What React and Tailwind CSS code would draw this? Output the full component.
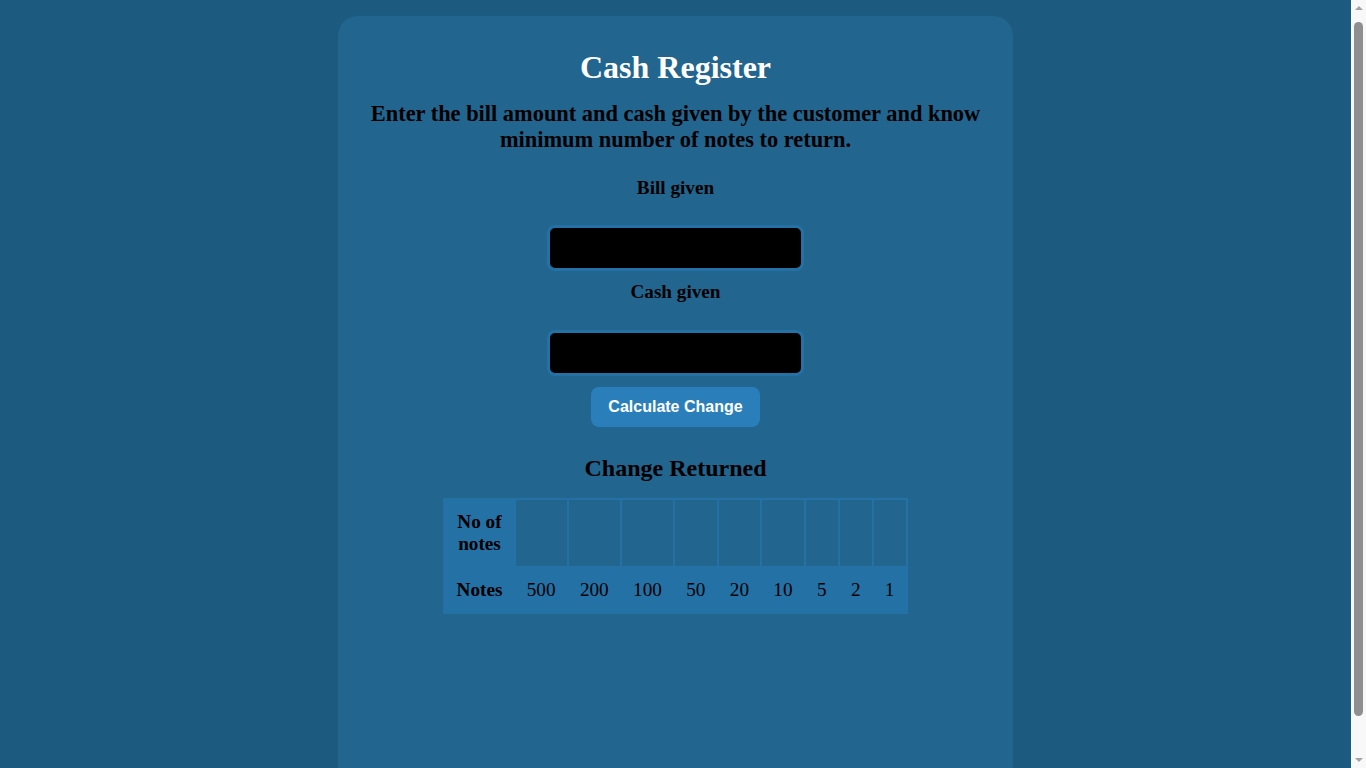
import { useState } from "react";

const notes = [500, 200, 100, 50, 20, 10, 5, 2, 1];

const App = () => {
    const [bill, setBill] = useState("");
    const [cash, setCash] = useState("");
    const [counts, setCounts] = useState(notes.map(() => ""));

    const calculate = () => {
        let left = Number(cash) - Number(bill);
        if (!bill || !cash || left < 0) {
            setCounts(notes.map(() => ""));
            return;
        }
        setCounts(
            notes.map((n) => {
                const c = Math.floor(left / n);
                left = left % n;
                return c;
            })
        );
    };

    return (
        <div className="min-h-screen bg-[#1d5a7f] py-4 pr-[15px] font-['Liberation_Serif',serif] leading-[1.15] text-black">
            <div className="mx-auto flex min-h-[780px] w-1/2 flex-col items-center rounded-[20px] bg-[#22658f] px-6 pt-[33px] text-center">
                <h1 className="text-[32px] font-bold text-white">Cash Register</h1>
                <h2 className="mt-[15px] text-[22.4px] font-bold">
                    Enter the bill amount and cash given by the customer and know minimum number of notes to return.
                </h2>

                <label htmlFor="bill" className="mt-[25px] text-[19.2px] font-bold">
                    Bill given
                </label>
                <input
                    id="bill"
                    type="number"
                    value={bill}
                    onChange={(e) => setBill(e.target.value)}
                    className="mt-[26px] h-[46px] w-[257px] rounded-lg border-[3px] border-[#2471a6] bg-black px-2 text-white outline-none"
                />

                <label htmlFor="cash" className="mt-[10px] text-[19.2px] font-bold">
                    Cash given
                </label>
                <input
                    id="cash"
                    type="number"
                    value={cash}
                    onChange={(e) => setCash(e.target.value)}
                    className="mt-[27px] h-[46px] w-[257px] rounded-lg border-[3px] border-[#2471a6] bg-black px-2 text-white outline-none"
                />

                <button
                    onClick={calculate}
                    className="mt-[11px] h-[40px] rounded-lg bg-[#2a7fba] px-[17px] font-['Liberation_Sans',Arial,sans-serif] text-[16px] font-bold text-white"
                >
                    Calculate Change
                </button>

                <h2 className="mt-[28px] text-[24px] font-bold">Change Returned</h2>

                <table className="mt-[15px] border-separate border-spacing-[2px] bg-[#2471a6] text-[19.2px]">
                    <tbody>
                        <tr>
                            <th className="px-[11.2px] py-[11px] font-bold">
                                No of
                                <br />
                                notes
                            </th>
                            {counts.map((c, i) => (
                                <td key={i} className="bg-[#22658f] px-[11.2px] py-[11px]">
                                    {c}
                                </td>
                            ))}
                        </tr>
                        <tr>
                            <th className="px-[11.2px] py-[11px] font-bold">Notes</th>
                            {notes.map((n) => (
                                <td key={n} className="px-[11.2px] py-[11px]">
                                    {n}
                                </td>
                            ))}
                        </tr>
                    </tbody>
                </table>
            </div>

            {/* scrollbar strip as in the screenshot */}
            <div className="fixed right-0 top-0 flex h-screen w-[15px] flex-col items-center bg-[#f8f8f8]">
                <div className="mt-[6px] h-0 w-0 border-x-[4px] border-b-[4px] border-x-transparent border-b-[#a3a3a3]" />
                <div className="mt-[12px] h-[694px] w-[9px] rounded-full bg-[#8f8f8f]" />
                <div className="mt-auto mb-[6px] h-0 w-0 border-x-[4px] border-t-[4px] border-x-transparent border-t-[#a3a3a3]" />
            </div>
        </div>
    );
};

export default App;
